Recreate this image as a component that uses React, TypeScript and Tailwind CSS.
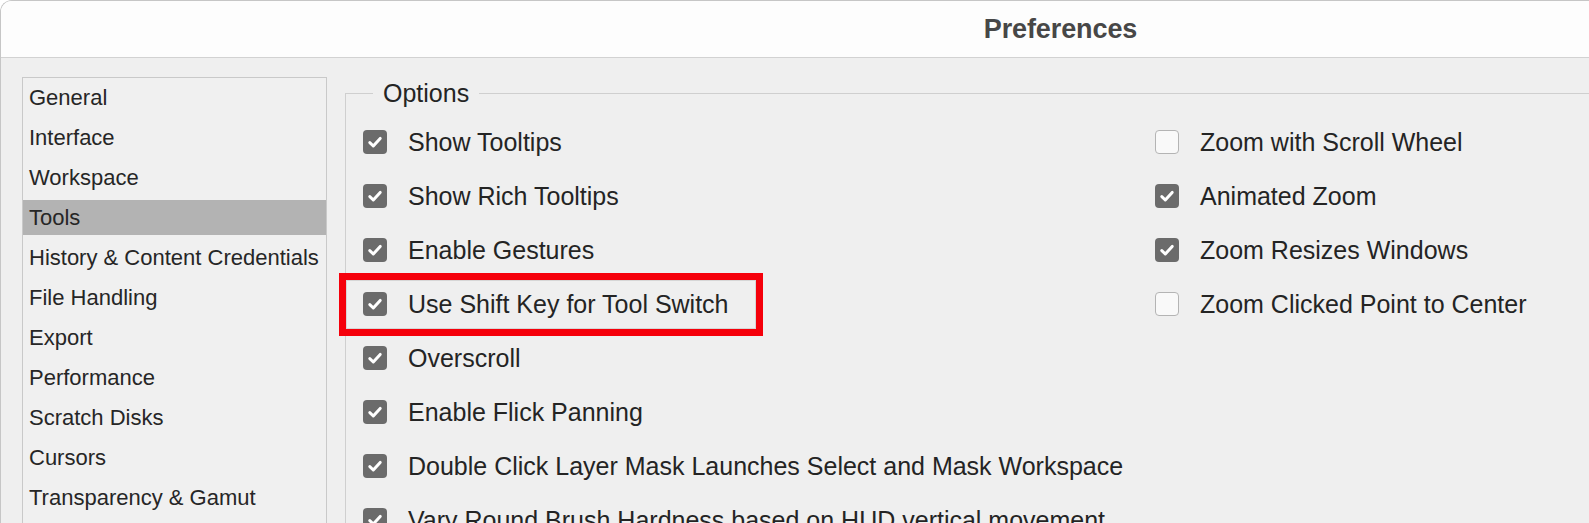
import React from "react";

const sidebarItems = [
  "General",
  "Interface",
  "Workspace",
  "Tools",
  "History & Content Credentials",
  "File Handling",
  "Export",
  "Performance",
  "Scratch Disks",
  "Cursors",
  "Transparency & Gamut",
];

const leftOptions = [
  { label: "Show Tooltips", checked: true },
  { label: "Show Rich Tooltips", checked: true },
  { label: "Enable Gestures", checked: true },
  { label: "Use Shift Key for Tool Switch", checked: true, highlight: true },
  { label: "Overscroll", checked: true },
  { label: "Enable Flick Panning", checked: true },
  { label: "Double Click Layer Mask Launches Select and Mask Workspace", checked: true },
  { label: "Vary Round Brush Hardness based on HUD vertical movement", checked: true },
];

const rightOptions = [
  { label: "Zoom with Scroll Wheel", checked: false },
  { label: "Animated Zoom", checked: true },
  { label: "Zoom Resizes Windows", checked: true },
  { label: "Zoom Clicked Point to Center", checked: false },
];

function Box({ checked }: { checked: boolean }) {
  if (!checked) {
    return (
      <div className="w-[24px] h-[24px] shrink-0 rounded-[4px] border border-[#b4b4b4] bg-[#f9f9f9]" />
    );
  }
  return (
    <div className="w-[24px] h-[24px] shrink-0 rounded-[4px] bg-[#6b6b6b] flex items-center justify-center">
      <svg width="24" height="24" viewBox="0 0 24 24">
        <path
          d="M6.8 12.6 L10.3 16 L17.2 8.4"
          fill="none"
          stroke="#ffffff"
          strokeWidth="3"
          strokeLinecap="round"
          strokeLinejoin="round"
        />
      </svg>
    </div>
  );
}

function Row({ label, checked, highlight }: { label: string; checked: boolean; highlight?: boolean }) {
  return (
    <div className="relative h-[54px] flex items-center gap-[21px] whitespace-nowrap">
      {highlight && (
        <div className="absolute left-[-24px] top-[-4px] w-[424px] h-[63px] border-[7px] border-[#f5000b] pointer-events-none">
          <div className="w-full h-full border border-[#d6d6d6]" />
        </div>
      )}
      <Box checked={checked} />
      <span className="text-[25px] text-[#242424] leading-none">{label}</span>
    </div>
  );
}

export default function App() {
  return (
    <div
      className="w-[1589px] h-[523px] overflow-hidden bg-white"
      style={{ fontFamily: '"Liberation Sans", Arial, sans-serif' }}
    >
      <div className="w-[2120px] h-[560px] rounded-tl-[12px] border-l border-t border-[#c6c6c6] overflow-hidden flex flex-col">
        <div className="h-[57px] shrink-0 bg-[#fdfdfd] border-b border-[#d2d2d2] flex items-center justify-center">
          <span className="text-[27px] font-bold text-[#474747] tracking-[-0.1px]">Preferences</span>
        </div>
        <div className="flex-1 bg-[#efefef] flex items-start pl-[21px] pt-[19px]">
          <div className="w-[305px] h-[480px] shrink-0 border border-[#c9c9c9] bg-[#f0f0f0] pt-[2px] flex flex-col gap-[5px]">
            {sidebarItems.map((item) => (
              <div
                key={item}
                className={`h-[35px] flex items-center pl-[6px] text-[22px] text-[#262626] whitespace-nowrap ${
                  item === "Tools" ? "bg-[#b3b3b3]" : ""
                }`}
              >
                {item}
              </div>
            ))}
          </div>
          <fieldset className="ml-[18px] mt-[2px] w-[1400px] h-[500px] border-l border-t border-[#cfcfcf] p-0">
            <legend className="ml-[27px] px-[10px] text-[25px] text-[#242424] leading-[28px]">Options</legend>
            <div className="flex pl-[17px] pt-[8px]">
              <div className="w-[792px] flex flex-col">
                {leftOptions.map((o) => (
                  <Row key={o.label} {...o} />
                ))}
              </div>
              <div className="flex flex-col">
                {rightOptions.map((o) => (
                  <Row key={o.label} {...o} />
                ))}
              </div>
            </div>
          </fieldset>
        </div>
      </div>
    </div>
  );
}
